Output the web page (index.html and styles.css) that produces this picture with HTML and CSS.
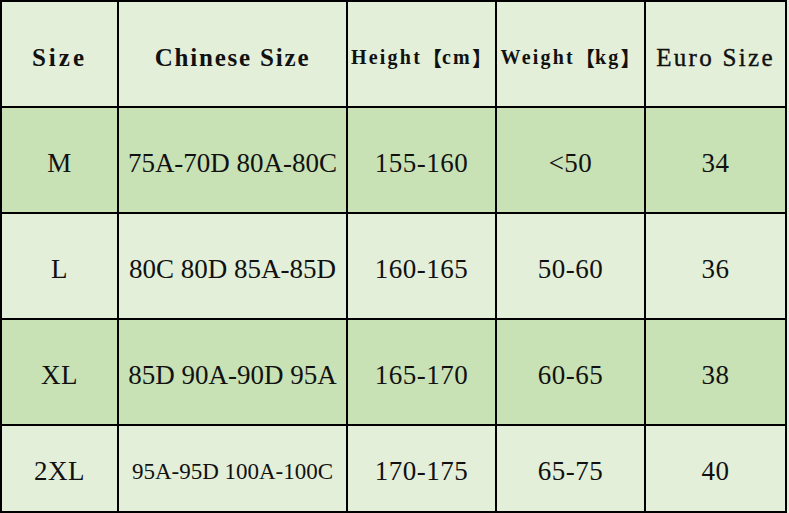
FILE: index.html
```html
<!DOCTYPE html>
<html>
<head>
<meta charset="utf-8">
<link rel="stylesheet" href="styles.css">
</head>
<body>
<div class="sheet">
  <div class="cell light h-big">Size</div>
  <div class="cell light h-big tight">Chinese Size</div>
  <div class="cell light h-small">Height<span class="br">【</span>cm<span class="br">】</span></div>
  <div class="cell light h-small">Weight<span class="br">【</span>kg<span class="br">】</span></div>
  <div class="cell light h-euro">Euro Size</div>

  <div class="cell dark d">M</div>
  <div class="cell dark d cs">75A-70D 80A-80C</div>
  <div class="cell dark d">155-160</div>
  <div class="cell dark d">&lt;50</div>
  <div class="cell dark d">34</div>

  <div class="cell light d">L</div>
  <div class="cell light d cs">80C 80D 85A-85D</div>
  <div class="cell light d">160-165</div>
  <div class="cell light d">50-60</div>
  <div class="cell light d">36</div>

  <div class="cell dark d">XL</div>
  <div class="cell dark d cs">85D 90A-90D 95A</div>
  <div class="cell dark d">165-170</div>
  <div class="cell dark d">60-65</div>
  <div class="cell dark d">38</div>

  <div class="cell light d">2XL</div>
  <div class="cell light d cs small">95A-95D 100A-100C</div>
  <div class="cell light d">170-175</div>
  <div class="cell light d">65-75</div>
  <div class="cell light d">40</div>
</div>
</body>
</html>
```

FILE: styles.css
```css
html, body {
  margin: 0;
  padding: 0;
  background: #e3efd9;
}
body {
  width: 789px;
  height: 513px;
  overflow: hidden;
}
.sheet {
  display: grid;
  grid-template-columns: 115px 227px 147px 147px 139px;
  grid-template-rows: 104px 104px 104px 104px 85px;
  gap: 2px;
  padding: 2px;
  background: #000;
  width: max-content;
}
.cell {
  display: flex;
  align-items: center;
  justify-content: center;
  color: #111;
  white-space: nowrap;
}
.light { background: #e3efd9; }
.dark { background: #c8e1b5; }
.h-big {
  font-family: "Liberation Serif", serif;
  font-weight: bold;
  font-size: 25px;
  letter-spacing: 3px;
  padding-top: 8px;
}
.h-big.tight {
  letter-spacing: 1.8px;
}
.h-small {
  font-family: "Liberation Serif", serif;
  font-weight: bold;
  font-size: 20px;
  letter-spacing: 2.2px;
  padding-top: 6px;
}
.h-small .br {
  font-family: "Noto Sans CJK SC", sans-serif;
  font-weight: 900;
  font-size: 20px;
  letter-spacing: 0;
}
.h-euro {
  font-family: "Liberation Serif", serif;
  font-size: 25px;
  letter-spacing: 2.3px;
  padding-top: 8px;
  -webkit-text-stroke: 0.4px #111;
}
.d {
  font-family: "Liberation Serif", serif;
  font-size: 27px;
  letter-spacing: 0.5px;
  padding-top: 6px;
}
.d.cs {
  letter-spacing: 0;
}
.d.small {
  font-size: 23px;
}
```
